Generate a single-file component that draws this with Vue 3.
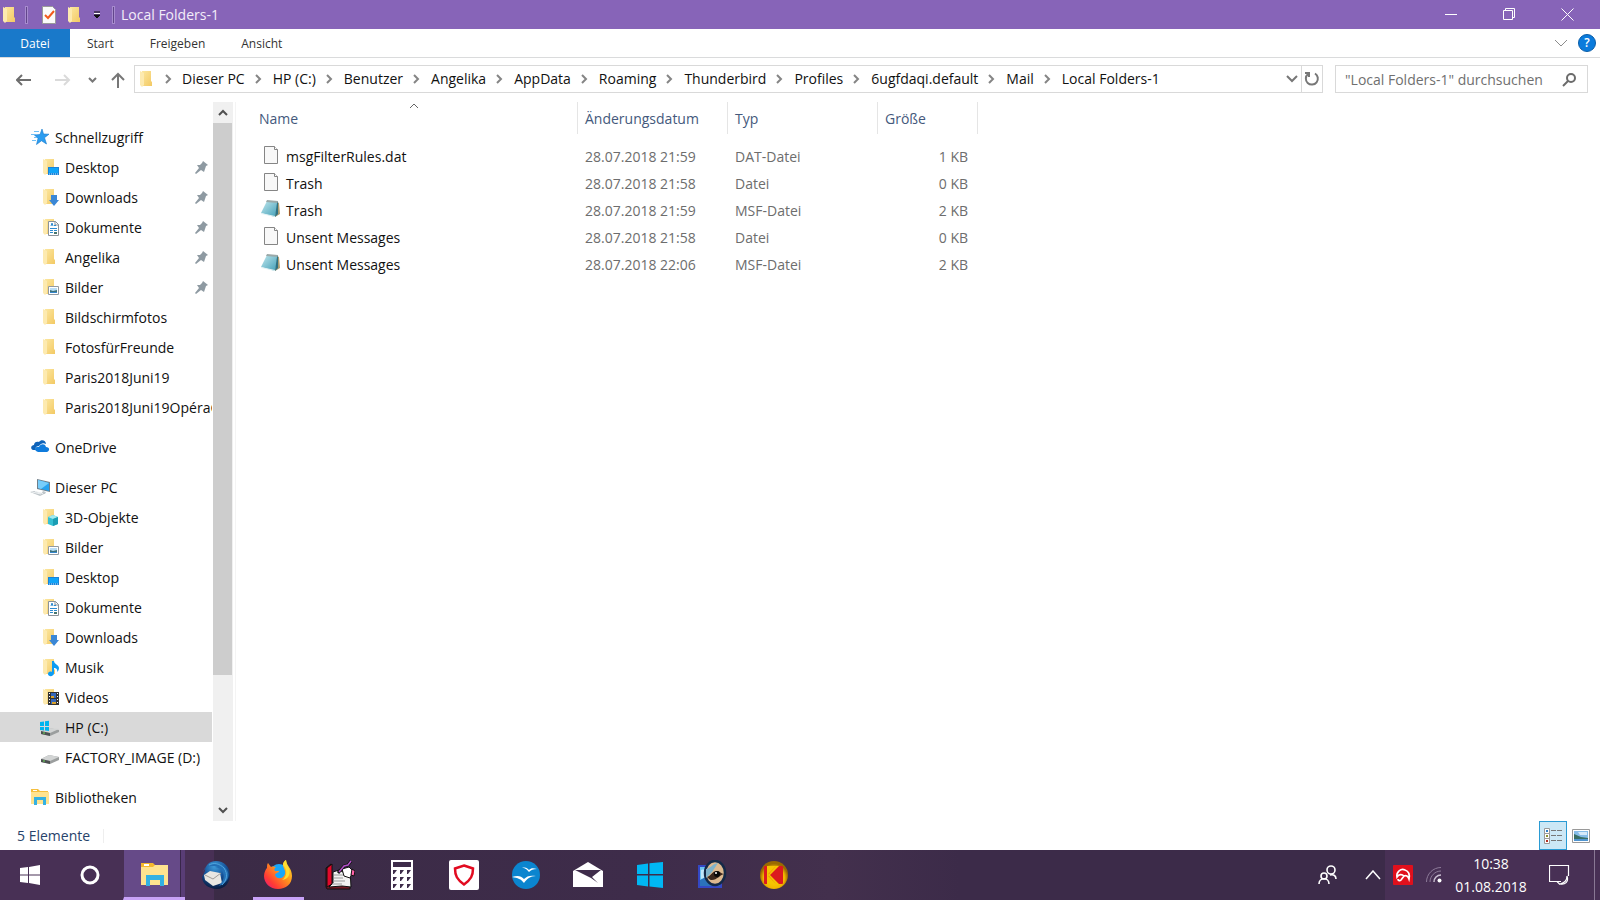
<script setup>
import { ref } from 'vue'

const tabs = ['Start', 'Freigeben', 'Ansicht']
const crumbs = ['Dieser PC', 'HP (C:)', 'Benutzer', 'Angelika', 'AppData', 'Roaming', 'Thunderbird', 'Profiles', '6ugfdaqi.default', 'Mail', 'Local Folders-1']

const groups = [
  {
    label: 'Schnellzugriff', icon: 'star',
    items: [
      { label: 'Desktop', icon: 'desktop', pinned: true },
      { label: 'Downloads', icon: 'downloads', pinned: true },
      { label: 'Dokumente', icon: 'documents', pinned: true },
      { label: 'Angelika', icon: 'folder', pinned: true },
      { label: 'Bilder', icon: 'pictures', pinned: true },
      { label: 'Bildschirmfotos', icon: 'folder' },
      { label: 'FotosfürFreunde', icon: 'folder' },
      { label: 'Paris2018Juni19', icon: 'folder' },
      { label: 'Paris2018Juni19OpéraGarnier', icon: 'folder' }
    ]
  },
  { label: 'OneDrive', icon: 'cloud', items: [] },
  {
    label: 'Dieser PC', icon: 'pc',
    items: [
      { label: '3D-Objekte', icon: 'cube' },
      { label: 'Bilder', icon: 'pictures' },
      { label: 'Desktop', icon: 'desktop' },
      { label: 'Dokumente', icon: 'documents' },
      { label: 'Downloads', icon: 'downloads' },
      { label: 'Musik', icon: 'music' },
      { label: 'Videos', icon: 'videos' },
      { label: 'HP (C:)', icon: 'windrive', selected: true },
      { label: 'FACTORY_IMAGE (D:)', icon: 'drive' }
    ]
  },
  { label: 'Bibliotheken', icon: 'library', items: [] }
]

const files = [
  { name: 'msgFilterRules.dat', icon: 'file', date: '28.07.2018 21:59', type: 'DAT-Datei', size: '1 KB' },
  { name: 'Trash', icon: 'file', date: '28.07.2018 21:58', type: 'Datei', size: '0 KB' },
  { name: 'Trash', icon: 'notepad', date: '28.07.2018 21:59', type: 'MSF-Datei', size: '2 KB' },
  { name: 'Unsent Messages', icon: 'file', date: '28.07.2018 21:58', type: 'Datei', size: '0 KB' },
  { name: 'Unsent Messages', icon: 'notepad', date: '28.07.2018 22:06', type: 'MSF-Datei', size: '2 KB' }
]

const apps = [
  { label: 'Explorer', icon: 'explorer', state: 'active' },
  { label: 'Thunderbird', icon: 'thunderbird' },
  { label: 'Firefox', icon: 'firefox', state: 'running' },
  { label: 'Notizbuch', icon: 'notebook' },
  { label: 'Rechner', icon: 'calculator' },
  { label: 'Sicherheit', icon: 'shield' },
  { label: 'OpenOffice', icon: 'openoffice' },
  { label: 'Mail', icon: 'mail' },
  { label: 'Windows', icon: 'windows' },
  { label: 'Bildbetrachter', icon: 'viewer' },
  { label: 'Kodak', icon: 'kodak' }
]

const query = ref('')
</script>

<template>
  <svg class="defs" aria-hidden="true">
    <defs>
      <linearGradient id="g-folder" x1="0" y1="0" x2="1" y2="1">
        <stop offset="0" stop-color="#fce7a0" /><stop offset="1" stop-color="#f3c963" />
      </linearGradient>
      <linearGradient id="g-pad" x1="0" y1="0" x2="1" y2="1">
        <stop offset="0" stop-color="#c2e8ee" /><stop offset="1" stop-color="#3f9db6" />
      </linearGradient>
      <linearGradient id="g-fox" x1="1" y1="0" x2="0" y2="1">
        <stop offset="0" stop-color="#ffe92e" /><stop offset=".4" stop-color="#ff9a1c" /><stop offset=".75" stop-color="#ff3a35" /><stop offset="1" stop-color="#e3148a" />
      </linearGradient>
      <radialGradient id="g-bird" cx=".45" cy=".2" r=".8">
        <stop offset="0" stop-color="#3f9cd9" /><stop offset=".5" stop-color="#17559c" /><stop offset="1" stop-color="#081b40" />
      </radialGradient>
      <radialGradient id="g-gold" cx=".5" cy=".6" r=".5">
        <stop offset="0" stop-color="#ffd800" /><stop offset=".75" stop-color="#f2b600" /><stop offset="1" stop-color="#9a6a00" />
      </radialGradient>
    </defs>

    <symbol id="i-folder" viewBox="0 0 20 20">
      <path d="M5 2h9v10l1 1v4H5z" fill="url(#g-folder)" />
      <path d="M3 2l4 2v12l-2 2-2-2z" fill="#fdeab0" />
    </symbol>
    <symbol id="i-desktop" viewBox="0 0 20 20">
      <use href="#i-folder" />
      <path d="M8 10h11v8H8z" fill="#1a83d8" /><path d="M9 11h9v5H9z" fill="#10a4f8" /><path d="M9 17h1m1 0h5m1 0h1" stroke="#bfe5ff" stroke-dasharray="1 1" />
    </symbol>
    <symbol id="i-downloads" viewBox="0 0 20 20">
      <use href="#i-folder" />
      <path d="M11 8h6v5h2l-5 6-5-6h2z" fill="#3a87d6" />
    </symbol>
    <symbol id="i-documents" viewBox="0 0 20 20">
      <use href="#i-folder" />
      <path d="M8.500 4.500h7l3 3v11h-10z" fill="#fff" stroke="#8b9299" /><path d="M15 4v4h4" fill="none" stroke="#8b9299" />
      <path d="M11 9l1-3 1 3M14 8.500h2M10 11.500h7M10 13.500h3M14 13.500h3M10 15.500h3" stroke="#2e8bd0" fill="none" /><path d="M14 15h3v2h-3z" fill="#49766e" />
    </symbol>
    <symbol id="i-pictures" viewBox="0 0 20 20">
      <use href="#i-folder" />
      <path d="M8.500 9.500h10v8h-10z" fill="#fff" stroke="#929aa2" /><path d="M10 11h7v5h-7z" fill="#b8dcf5" /><path d="M10 13l3 1 4-1v3h-7z" fill="#3d7178" /><path d="M10 15h7v1h-7z" fill="#3687cd" />
    </symbol>
    <symbol id="i-cube" viewBox="0 0 20 20">
      <use href="#i-folder" />
      <path d="M13 8l5 2v7l-5 2-5-2v-7z" fill="#35bfd2" /><path d="M8 10l5-2 5 2-5 2z" fill="#a2e9ef" /><path d="M13 12l5-2v7l-5 2z" fill="#1a9db4" />
    </symbol>
    <symbol id="i-music" viewBox="0 0 20 20">
      <use href="#i-folder" />
      <path d="M12 4h2c0 3 5 4 5 7 0 2-1 3-2 4 1-3-1-4-3-4v5c0 4-6 4-6 1 0-2 2-3 4-2z" fill="#0c9cf3" />
    </symbol>
    <symbol id="i-videos" viewBox="0 0 20 20">
      <use href="#i-folder" />
      <path d="M8 5h11v13H8z" fill="#333" /><path d="M11 6h5v5h-5z" fill="#3467bb" /><path d="M11 12h5v5h-5z" fill="#3467bb" /><path d="M11 9h3v2h-3zM12 15h4v2h-4z" fill="#d9a12b" />
      <path d="M9.500 6v12M17.500 6v12" stroke="#fff" stroke-dasharray="1 2" />
    </symbol>
    <symbol id="i-star" viewBox="0 0 20 20">
      <path d="M12 2l1.500 5 5.500.2-4.500 3.500L16.500 17l-5-3.200-5 3.700L8 11.500 4.500 8l5.500-.5z" fill="#2b9df0" stroke="#1579cb" stroke-width=".6" />
      <path d="M4 4.500h5M1 7.500h5M4 10.500h3M2 13.500h4" stroke="#6fbff5" />
    </symbol>
    <symbol id="i-cloud" viewBox="0 0 20 20">
      <path d="M3 13c-3-1-2-5 1-5 0-3 3-4 5-3 2-3 7-2 7 2-3-2-6 0-7 2-3 0-4 2-3 4z" fill="#0e62b8" />
      <path d="M6 14c-2-2 0-5 3-4 1-3 6-4 7 0 4 0 4 4 1 5H8z" fill="#0f7bdc" />
    </symbol>
    <symbol id="i-pc" viewBox="0 0 20 20">
      <path d="M7 2l13 3v10L7 12z" fill="#707f8a" /><path d="M8 3l11 3v8L8 11z" fill="#27a2ef" /><path d="M8 3l11 3-8 6-3-1z" fill="#78cdfa" />
      <path d="M13 14l3 1-1 2h-4zM0 15l4-1 10 3-4 2z" fill="#bfc6ca" /><path d="M2 15l9 2M5 14.500l8 2" stroke="#eef1f3" />
    </symbol>
    <symbol id="i-drive" viewBox="0 0 20 20">
      <path d="M1 12l8-4 10 2v3l-9 4-9-2z" fill="#9b9e9e" /><path d="M1 12l8-4 10 2-9 4z" fill="#d2d4d4" /><path d="M1 12l9 2v3l-9-2z" fill="#4d5151" /><path d="M3 14h2" stroke="#6bdd58" />
    </symbol>
    <symbol id="i-windrive" viewBox="0 0 20 20">
      <path d="M1 15l8-4 10 2v2l-9 4-9-2z" fill="#9b9e9e" /><path d="M1 15l8-4 10 1-9 4z" fill="#d2d4d4" /><path d="M1 14l9 2v3l-9-2z" fill="#4d5151" /><path d="M3 16h2" stroke="#6bdd58" />
      <path d="M0 5l4-.5V9H0zM5 4.300l4-.5V9H5zM0 10h4v3.600L0 13zM5 10h4v4l-4-.4z" fill="#00b4ef" />
    </symbol>
    <symbol id="i-library" viewBox="0 0 20 20">
      <path d="M1 2h7l2 2h8v13H1z" fill="#f5bf3e" /><path d="M3 3h4v1H3z" fill="#fff" /><path d="M1 5h18v12H1z" fill="#ffe38f" /><path d="M4 18v-8h12v8h-3v-5H7v5z" fill="#34b1e2" />
    </symbol>
    <symbol id="i-file" viewBox="0 0 20 20">
      <path d="M3.500 1.500h10l3 3v14h-13z" fill="#f8f8f8" stroke="#858585" /><path d="M13.500 1.500v3h3" fill="#fff" stroke="#858585" />
    </symbol>
    <symbol id="i-notepad" viewBox="0 0 20 20">
      <path d="M16 3l2 1 1 11-5 3z" fill="#ad9d72" /><path d="M6 2l11 1-3 15L0 14z" fill="url(#g-pad)" /><path d="M6 1l11 1v2L5 3z" fill="#9aa9a9" /><path d="M16 4l1-1v12l-3 3z" fill="#2f7183" /><path d="M0 14l14 3v1L0 15z" fill="#e5f3f5" />
    </symbol>

    <symbol id="i-explorer" viewBox="0 0 30 30">
      <path d="M1 3h12l2 2h12v5H1z" fill="#f5b82e" /><path d="M4 4h5v2H4z" fill="#fff" /><path d="M1 7h12l2-2h13v20H1z" fill="#ffe38f" /><path d="M6 26V15h18v11h-4v-6H10v6z" fill="#34b1e2" />
    </symbol>
    <symbol id="i-thunderbird" viewBox="0 0 30 30">
      <path d="M4 11C4 5 9 1 15 1c8 0 14 6 14 14 0 7-5 14-13 14C8 29 1 24 1 17z" fill="url(#g-bird)" />
      <path d="M3 15l6-4 10 2 2 10-9 3-8-6z" fill="#e9e7e2" /><path d="M4 15l8 4 8-6" fill="none" stroke="#a09c98" />
      <path d="M2 12C4 5 10 6 13 6l4 1-4 1c6-1 8 2 9 5 2 5-1 9-4 13 8-3 12-10 8-16C21 1 7 2 2 12z" fill="#236fb5" /><path d="M23 8c4 6 3 12-2 17M8 5c5-3 11-1 15 3" fill="none" stroke="#4fa5dc" />
    </symbol>
    <symbol id="i-firefox" viewBox="0 0 30 30">
      <circle cx="15" cy="16" r="11" fill="#1767dc" /><circle cx="16" cy="12" r="8" fill="#18a7fa" />
      <path d="M5 3l3 4c2-1 4 0 5 0-2 1-2 3-1 4h4c0 2-4 2-4 4 1 4 8 5 10-1 1-4-2-6-2-9 0-2 1-4 3-5 0 5 6 8 6 16 0 8-6 13-14 13S1 23 1 16c0-4 2-7 3-8 0-2 0-4 1-5z" fill="url(#g-fox)" />
      <path d="M20 5c5 5 4 12-1 15 9-1 9-10 5-15l-1-5c-2 1-3 3-3 5z" fill="#ffdc30" />
    </symbol>
    <symbol id="i-notebook" viewBox="0 0 30 30">
      <path d="M1 8l5-4v20l19 2v3H2l-1-2z" fill="#731722" stroke="#111" /><path d="M2 8l5-4v20l-5 3z" fill="#e3092b" stroke="#111" />
      <path d="M8 12l6-2 4 2 7-3 1 18-9-1-13 1 4-4z" fill="#f2f2f2" stroke="#111" /><path d="M9 15h9M9 18h9M8 21h12M7 24h10" stroke="#999" />
      <path d="M17 9l7-2 4 4-3 7-6-2z" fill="#fff" stroke="#111" /><path d="M13 13l6-7 4-1 3-4" fill="none" stroke="#111" stroke-width="3" /><path d="M14 12l5-6 4-1 3-4" fill="none" stroke="#b34fca" stroke-width="1.500" /><path d="M27 9l3 2-1 5-3-1z" fill="#ff62a8" stroke="#111" />
    </symbol>
    <symbol id="i-calculator" viewBox="0 0 30 30">
      <path d="M4 0h22v30H4z" fill="#fff" /><path d="M6 2h18v5H6zM6 10h4l-3 4H6zM13 10h4l-3 4h-1zM20 10h4l-3 4h-1zM6 17h4l-3 4H6zM13 17h4l-3 4h-1zM20 17h4l-3 4h-1zM6 24h4l-3 4H6zM13 24h4l-3 4h-1zM20 24h4l-3 4h-1z" fill="#3e2c4a" />
    </symbol>
    <symbol id="i-shield" viewBox="0 0 30 30">
      <rect width="30" height="30" rx="2" fill="#fff" /><path d="M15 5.500l9 3c0 7-2 11-9 16-7-5-9-9-9-16z" fill="none" stroke="#e20b20" stroke-width="2.500" />
    </symbol>
    <symbol id="i-openoffice" viewBox="0 0 30 30">
      <circle cx="15" cy="15" r="14" fill="#0b85cf" />
      <path d="M11 8c4-1 5 0 7 2 2-2 4-2 8-1-4 0-6 1-8 3-2-2-3-4-7-4zM1 17c6-2 9-1 12 2 3-3 6-4 12-3-6 0-9 3-12 7-3-4-6-5-12-6z" fill="#fff" />
    </symbol>
    <symbol id="i-mail" viewBox="0 0 30 30">
      <path d="M0 11L15 2l15 9v16H0z" fill="#fff" /><path d="M2 10h26l-9 7 6 6-7-5z" fill="#3e2c4a" />
    </symbol>
    <symbol id="i-windows" viewBox="0 0 30 30">
      <path d="M2 5l11-1.500V14H2zM14.500 3.300L28 2v12H14.500zM2 15.500h11v11L2 25zM14.500 15.500H28V28l-13.500-1.400z" fill="#00b7f3" />
    </symbol>
    <symbol id="i-viewer" viewBox="0 0 30 30">
      <path d="M1 5h24v23H1z" fill="#3448c5" /><path d="M3 7h20v19H3z" fill="#6cc3f0" /><path d="M3 20l6-3 8 5 6-4v8H3z" fill="#2b72bb" /><path d="M4 10c3-2 4 2 7-1v7l-7 3z" fill="#bfe7f9" />
      <ellipse cx="18" cy="13" rx="10" ry="12" fill="#dcb98f" stroke="#142a48" stroke-width="2.500" /><path d="M9 9c4 0 6-5 12-6l-6 9-6 6z" fill="#7db3cb" /><path d="M10 17c4-1 5-6 10-6 3 0 4 3 7 3-4 1-7 6-12 6-3 0-3-2-5-3z" fill="#3b271c" /><circle cx="20" cy="14" r="3" fill="#080808" /><circle cx="19" cy="13" r="1" fill="#fff" />
    </symbol>
    <symbol id="i-kodak" viewBox="0 0 30 30">
      <circle cx="15" cy="15" r="14" fill="url(#g-gold)" /><rect x="5" y="6" width="19" height="18" rx="1" fill="#dc1a1e" /><path d="M8 6h1.500v18H8zM9.500 6H17l-7.500 8zM9.500 24H17l-7.500-8zM17 6h3l-9 9 9 9h-3l-8-9z" fill="#f6c400" />
    </symbol>
  </svg>

  <div class="screen">
    <header class="titlebar">
      <svg class="ic" width="20" height="20"><use href="#i-folder" /></svg>
      <i class="rule"></i>
      <svg class="check" width="14" height="18" viewBox="0 0 14 18"><path d="M.500.500h10l3 3v14H.500z" fill="#fafafa" stroke="#9a9a9a" /><path d="M3 9l3 3 6-7" fill="none" stroke="#f25a1c" stroke-width="2" /></svg>
      <svg class="ic second" width="20" height="20"><use href="#i-folder" /></svg>
      <svg class="tiny" width="8" height="8" viewBox="0 0 8 8"><path d="M1 1h6M1 4h6L4 7z" fill="#111" stroke="#111" /><path d="M1 2.500h6" stroke="#fff" /></svg>
      <i class="rule last"></i>
      <h1>Local Folders-1</h1>
      <div class="winbtns">
        <button aria-label="Minimieren"><svg width="13" height="13" viewBox="0 0 13 13"><path d="M0 6.500h12" /></svg></button>
        <button aria-label="Verkleinern"><svg width="13" height="13" viewBox="0 0 13 13"><path d="M.500 2.500h9v9h-9zM2.500 2V.500h9v9H10" /></svg></button>
        <button aria-label="Schließen"><svg width="13" height="13" viewBox="0 0 13 13"><path d="M.500.500l12 12M12.500.500l-12 12" /></svg></button>
      </div>
    </header>

    <nav class="ribbon" aria-label="Menüband">
      <button class="tab file">Datei</button>
      <button v-for="t in tabs" :key="t" class="tab">{{ t }}</button>
      <button class="expand" aria-label="Menüband erweitern"><svg width="14" height="8" viewBox="0 0 14 8"><path d="M1 1l6 6 6-6" fill="none" stroke="#8c8c8c" /></svg></button>
      <button class="help" aria-label="Hilfe">?</button>
    </nav>

    <div class="address">
      <div class="history">
        <button aria-label="Zurück"><svg width="16" height="12" viewBox="0 0 16 12"><path d="M15 6H1M6 1L1 6l5 5" stroke="#6e6e6e" stroke-width="2" fill="none" /></svg></button>
        <button aria-label="Vorwärts"><svg width="16" height="12" viewBox="0 0 16 12"><path d="M0 6h14M9 1l5 5-5 5" stroke="#dadada" stroke-width="2" fill="none" /></svg></button>
        <button aria-label="Verlauf"><svg width="9" height="6" viewBox="0 0 9 6"><path d="M1 1l3.500 3.500L8 1" stroke="#777" stroke-width="2" fill="none" /></svg></button>
        <button aria-label="Nach oben"><svg width="14" height="16" viewBox="0 0 14 16"><path d="M7 16V2M1 8l6-6 6 6" stroke="#777" stroke-width="2" fill="none" /></svg></button>
      </div>
      <div class="path">
        <svg class="ic" width="20" height="20"><use href="#i-folder" /></svg>
        <template v-for="c in crumbs" :key="c">
          <svg class="sep" width="7" height="10" viewBox="0 0 7 10"><path d="M1 1l4 4-4 4" stroke="#858585" stroke-width="2" fill="none" /></svg>
          <a href="#">{{ c }}</a>
        </template>
        <button class="drop" aria-label="Vorherige Orte"><svg width="12" height="8" viewBox="0 0 12 8"><path d="M1 1l5 5 5-5" stroke="#777" stroke-width="2" fill="none" /></svg></button>
        <button class="reload" aria-label="Aktualisieren"><svg width="16" height="16" viewBox="0 0 16 16"><path d="M11 2.500a6 6 0 1 1-7 .5M1 2h4v4" stroke="#777" stroke-width="2" fill="none" /></svg></button>
      </div>
      <label class="search">
        <input v-model="query" type="text" aria-label="Suche" placeholder="&quot;Local Folders-1&quot; durchsuchen" />
        <svg width="14" height="14" viewBox="0 0 14 14"><circle cx="9" cy="5" r="4" fill="none" stroke="#6b6b6b" stroke-width="2" /><path d="M6 8l-5 5" stroke="#6b6b6b" stroke-width="2" /></svg>
      </label>
    </div>

    <main class="body">
      <aside class="tree">
        <ul v-for="g in groups" :key="g.label">
          <li class="node root"><svg width="20" height="20"><use :href="'#i-' + g.icon" /></svg><span>{{ g.label }}</span></li>
          <li v-for="n in g.items" :key="n.label" class="node" :class="{ selected: n.selected }">
            <svg width="20" height="20"><use :href="'#i-' + n.icon" /></svg><span>{{ n.label }}</span>
            <svg v-if="n.pinned" class="pin" width="13" height="13" viewBox="0 0 13 13"><path d="M8 0l5 4-2 1-1 3-1 3-3-2-5 4-1-1 4-5-2-3 3 0 2-2z" fill="#8e9aa2" /></svg>
          </li>
        </ul>
      </aside>
      <div class="scroll">
        <button aria-label="Nach oben blättern"><svg width="10" height="7" viewBox="0 0 10 7"><path d="M1 6l4-4 4 4" stroke="#505050" stroke-width="2" fill="none" /></svg></button>
        <div class="track"><div class="thumb"></div></div>
        <button aria-label="Nach unten blättern"><svg width="10" height="7" viewBox="0 0 10 7"><path d="M1 1l4 4 4-4" stroke="#505050" stroke-width="2" fill="none" /></svg></button>
      </div>
      <section class="list">
        <table>
          <colgroup><col class="c-name" /><col class="c-date" /><col class="c-type" /><col class="c-size" /></colgroup>
          <thead>
            <tr>
              <th class="name">Name<svg class="sort" width="10" height="6" viewBox="0 0 10 6"><path d="M1 5l4-4 4 4" stroke="#666" fill="none" /></svg></th>
              <th>Änderungsdatum</th><th>Typ</th><th>Größe</th>
            </tr>
          </thead>
          <tbody>
            <tr v-for="(f, i) in files" :key="i">
              <td class="name"><div><svg width="20" height="20"><use :href="'#i-' + f.icon" /></svg>{{ f.name }}</div></td>
              <td>{{ f.date }}</td><td>{{ f.type }}</td><td class="size">{{ f.size }}</td>
            </tr>
          </tbody>
        </table>
      </section>
    </main>

    <footer class="status">
      <span class="count">5 Elemente</span>
      <button class="view on" aria-label="Details"><svg width="18" height="16" viewBox="0 0 18 16"><path d="M.500.500h5v5h-5zM.500 5.500h5v5h-5zM.500 10.500h5v5h-5z" fill="#fff" stroke="#9a9a9a" /><path d="M2 2h2v2H2z" fill="#2f7fc6" /><path d="M2 7h2v2H2z" fill="#8c9431" /><path d="M2 12h2v2H2z" fill="#b52e20" /><path d="M7 2.500h5M13 2.500h5M7 7.500h5M13 7.500h5M7 12.500h5M13 12.500h5" stroke="#777" /></svg></button>
      <button class="view" aria-label="Große Symbole"><svg width="18" height="14" viewBox="0 0 18 14"><path d="M.500.500h17v13H.500z" fill="#fff" stroke="#999" /><path d="M2 2h14v10H2z" fill="#86bde9" /><path d="M2 5l7 3 7 1v1H2z" fill="#396f65" /><path d="M6 3h9v3H8z" fill="#d6eafa" /><path d="M2 10h14v2H2z" fill="#4f94d0" /></svg></button>
    </footer>

    <footer class="taskbar">
      <button class="sys" aria-label="Start"><svg width="20" height="20" viewBox="0 0 20 20"><path d="M0 3l8-1v7.500H0zM9 2l11-2v9.500H9zM0 10.500h8V18l-8-1zM9 10.500h11V20L9 18z" fill="#fff" /></svg></button>
      <button class="sys" aria-label="Suchen"><svg width="20" height="20" viewBox="0 0 20 20"><circle cx="10" cy="10" r="8" fill="none" stroke="#fff" stroke-width="3" /></svg></button>
      <div class="apps">
        <button v-for="a in apps" :key="a.label" class="app" :class="a.state" :aria-label="a.label"><svg width="30" height="30"><use :href="'#i-' + a.icon" /></svg></button>
      </div>
      <div class="tray">
        <button class="people" aria-label="Kontakte"><svg width="20" height="20" viewBox="0 0 20 20"><g fill="none" stroke="#fff" stroke-width="1.600"><circle cx="13" cy="5" r="4" /><circle cx="6" cy="11" r="3" /><path d="M1 19c0-7 10-7 10 0M12 10c4-1 6 1 6 4" /></g></svg></button>
        <button class="more" aria-label="Ausgeblendete Symbole"><svg width="16" height="10" viewBox="0 0 16 10"><path d="M1 9l7-8 7 8" fill="none" stroke="#fff" stroke-width="1.500" /></svg></button>
        <div class="shade">
          <button class="avira" aria-label="Avira"><svg width="20" height="20" viewBox="0 0 20 20"><rect width="20" height="20" rx="1" fill="#e0101c" /><path d="M4 12C3 7 8 3 12 5c3 1 5 4 4 9-1-3-3-4-5-3-2-2-5-2-7 1zM11 11l-3 4c-1 1-3 1-3-1" fill="none" stroke="#fff" stroke-width="1.700" /></svg></button>
          <button class="wifi" aria-label="Netzwerk"><svg width="16" height="16" viewBox="0 0 16 16"><g fill="none"><path d="M.500 15C.500 7 7 .500 15 .500M4 15C4 9 9 4 15 4" stroke="#8d7b99" /><path d="M8 15c0-4 3-7 7-7" stroke="#c9bed1" stroke-width="1.500" /></g><circle cx="13.500" cy="13.500" r="2" fill="#fff" /></svg></button>
          <time class="clock"><span>10:38</span><span>01.08.2018</span></time>
          <button class="note" aria-label="Info-Center"><svg width="21" height="21" viewBox="0 0 21 21"><path d="M12 16.500H8M19.500 11V.500H.500v16H8l3 3" fill="none" stroke="#fff" stroke-width="1.200" /><path d="M18 11c2 6-2 9-7 8 4-1 7-3 7-8z" fill="#483055" stroke="#fff" stroke-width="1.200" /></svg></button>
          <i class="peek"></i>
        </div>
      </div>
    </footer>
  </div>
</template>

<style>
body { margin: 0; overflow: hidden; }
</style>

<style scoped>
* { box-sizing: border-box; }
.defs { position: absolute; width: 0; height: 0; }
.screen { display: flex; flex-direction: column; height: 100vh; background: #fff; color: #111; font: 14px/20px "Open Sans", "Noto Sans", sans-serif; }
button { display: flex; align-items: center; justify-content: center; padding: 0; border: 0; background: none; font: inherit; color: inherit; }
svg { flex: none; display: block; }

.titlebar { display: flex; align-items: center; flex: none; height: 29px; background: #8764b8; color: #f3edf9; }
.titlebar .rule { width: 3px; height: 18px; margin-left: 5px; border: 1px solid #a78bce; background: #62468b; }
.titlebar .check { margin-left: 14px; }
.titlebar .second { margin-left: 9px; }
.titlebar .tiny { margin-left: 8px; }
.titlebar .last { margin-left: 11px; }
.titlebar h1 { margin: 0 0 0 6px; font-size: 14px; font-weight: 400; }
.winbtns { display: flex; margin-left: auto; align-self: stretch; margin-right: 4px; }
.winbtns button { width: 58px; }
.winbtns path { fill: none; stroke: #fff; }

.ribbon { display: flex; flex: none; height: 29px; border-bottom: 1px solid #dadbdc; font-size: 12px; color: #333; }
.tab { padding: 2px 19px 0 17px; }
.tab.file { width: 70px; padding: 2px 0 0; background: #1979ca; color: #fff; }
.expand { margin-left: auto; width: 24px; }
.help { width: 18px; height: 18px; margin: 5px 4px 0 5px; border: 1px solid #0a5da8; border-radius: 50%; background: #0a7bdc; color: #fff; font-weight: 600; }

.address { display: flex; flex: none; padding: 7px 12px 9px 0; }
.history { display: flex; align-items: center; gap: 14px; width: 134px; padding: 2px 0 0 16px; }
.history button:nth-child(2) { margin-left: 9px; }
.history button:nth-child(3) { margin-left: 3px; }
.path { display: flex; flex: 1; align-items: center; height: 28px; border: 1px solid #d9d9d9; }
.path .ic { margin: 0 0 1px 2px; }
.path a { color: #111; text-decoration: none; white-space: nowrap; }
.sep { margin: 0 11px 0 10px; }
.path .ic + .sep { margin-left: 8px; margin-right: 10px; }
.drop { margin-left: auto; width: 18px; }
.reload { align-self: stretch; width: 21px; border-left: 1px solid #d9d9d9; }
.search { display: flex; align-items: center; width: 253px; height: 28px; margin-left: 12px; padding: 1px 11px 0 9px; border: 1px solid #d9d9d9; }
.search input { flex: 1; min-width: 0; padding: 0; border: 0; outline: 0; background: none; font: inherit; }
.search input::placeholder { color: #6f6f6f; opacity: 1; }

.body { display: flex; flex: 1; min-height: 0; }
.tree { width: 213px; padding-top: 20px; overflow: hidden; }
.tree ul { margin: 0 0 10px; padding: 0; list-style: none; }
.node { display: flex; align-items: center; gap: 5px; width: 212px; height: 30px; padding-left: 40px; white-space: nowrap; overflow: hidden; }
.node span { padding-top: 2px; }
.node.root { padding-left: 30px; }
.node.selected { background: #d9d9d9; }
.pin { margin: 0 4px 0 auto; }
.scroll { display: flex; flex-direction: column; width: 20px; background: #f0f0f0; }
.scroll button { width: 19px; height: 21px; }
.track { flex: 1; }
.thumb { height: 81.5%; width: 19px; background: #cdcdcd; }
.list { flex: 1; margin-left: 2px; border-left: 1px solid #f4f4f4; }
table { border-collapse: separate; border-spacing: 0; table-layout: fixed; width: 742px; }
.c-name { width: 342px; }
.c-date, .c-type { width: 150px; }
.c-size { width: 100px; }
th { position: relative; height: 32px; padding: 2px 0 0 7px; border-right: 1px solid #e5e5e5; text-align: left; font-weight: 400; color: #44597c; }
th.name { padding-left: 23px; }
.sort { position: absolute; top: 1px; left: 173px; }
tbody::before { content: ""; display: block; height: 9px; }
td { height: 27px; padding: 0 0 0 7px; color: #6d6d6d; }
td.name { padding-left: 25px; color: #111; }
td.name div { display: flex; align-items: center; gap: 5px; }
td.name svg { margin-bottom: 3px; }
td.size { padding-right: 10px; text-align: right; }

.status { display: flex; flex: none; align-items: center; height: 29px; padding-right: 6px; color: #27436b; }
.count { padding: 0 13px 0 17px; border-right: 1px solid #eee; line-height: 14px; margin-right: auto; }
.view { width: 27px; height: 29px; }
.view.on { width: 28px; border: 1px solid #2a9bd4; background: #cce8f6; }

.taskbar { display: flex; flex: none; height: 50px; background: linear-gradient(90deg, #483055 0, #483055 214px, #3b2b46 214px, #3e2c4a 40%, #43304d 52%, #3c2b49 60%, #3c2b49 100%); color: #fff; }
.sys { width: 60px; }
.apps { display: flex; padding-left: 3px; }
.app { width: 62px; border-bottom: 3px solid transparent; padding-top: 3px; }
.app.active { border-left: 1px solid #483055; border-bottom-color: #c8a2f8; background: linear-gradient(90deg, #664a88 56px, #38264a 56px, #38264a 57px, #593d76 57px); }
.app.running { background: linear-gradient(#c8a2f8, #c8a2f8) 6px 100% / 51px 3px no-repeat border-box; }
.tray { display: flex; margin-left: auto; }
.people { width: 48px; }
.more { width: 24px; margin-left: 9px; }
.shade { display: flex; align-items: center; background: #483055; }
.shade button { height: 50px; }
.avira { width: 28px; margin-left: 4px; }
.wifi { width: 34px; }
.clock { display: flex; flex-direction: column; width: 80px; text-align: center; line-height: 23px; }
.note { width: 56px; margin-right: 7px; }
.peek { width: 6px; height: 50px; border-left: 1px solid #897894; }
</style>
